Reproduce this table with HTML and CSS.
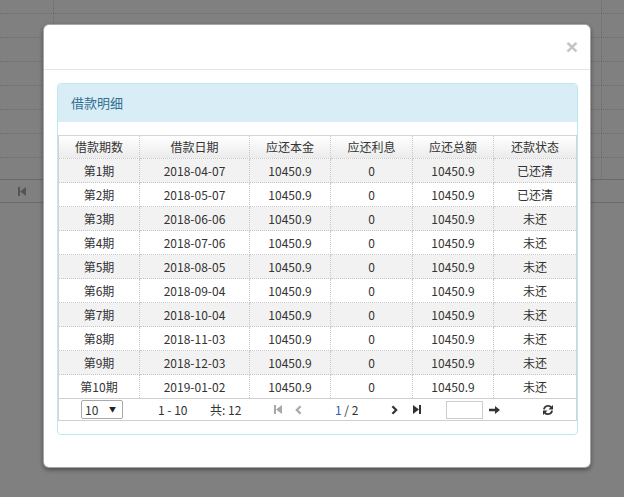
FILE: index.html
```html
<!DOCTYPE html>
<html lang="zh-CN">
<head>
<meta charset="utf-8">
<title>借款明细</title>
<link rel="stylesheet" href="styles.css">
</head>
<body>
<div class="page">
  <div class="bg-row first"><div class="bg-cell"></div><div class="bg-cell wide"></div></div>
  <div class="bg-row"><div class="bg-cell"></div><div class="bg-cell wide"></div></div>
  <div class="bg-row"><div class="bg-cell"></div><div class="bg-cell wide"></div></div>
  <div class="bg-row"><div class="bg-cell"></div><div class="bg-cell wide"></div></div>
  <div class="bg-row"><div class="bg-cell"></div><div class="bg-cell wide"></div></div>
  <div class="bg-row"><div class="bg-cell"></div><div class="bg-cell wide"></div></div>
  <div class="bg-row"><div class="bg-cell"></div><div class="bg-cell wide"></div></div>
  <div class="bg-row last"><div class="bg-cell"></div><div class="bg-cell wide"></div></div>
  <div class="bg-pager">
    <svg class="ico" width="8" height="9" viewBox="0 0 8 9"><rect x="0" y="0" width="2" height="9" fill="#555"/><polygon points="8,0 2,4.5 8,9" fill="#555"/></svg>
  </div>
</div>

<div class="modal">
  <div class="modal-header">
    <span class="close">×</span>
  </div>
  <div class="modal-body">
    <div class="panel">
      <div class="panel-heading">借款明细</div>
      <div class="panel-body">
        <div class="grid-wrap">
          <table class="grid">
            <colgroup>
              <col class="c1"><col class="c2"><col class="c3"><col class="c4"><col class="c5"><col class="c6">
            </colgroup>
            <thead>
              <tr><th>借款期数</th><th>借款日期</th><th>应还本金</th><th>应还利息</th><th>应还总额</th><th>还款状态</th></tr>
            </thead>
            <tbody>
              <tr class="odd"><td>第1期</td><td>2018-04-07</td><td>10450.9</td><td>0</td><td>10450.9</td><td>已还清</td></tr>
              <tr><td>第2期</td><td>2018-05-07</td><td>10450.9</td><td>0</td><td>10450.9</td><td>已还清</td></tr>
              <tr class="odd"><td>第3期</td><td>2018-06-06</td><td>10450.9</td><td>0</td><td>10450.9</td><td>未还</td></tr>
              <tr><td>第4期</td><td>2018-07-06</td><td>10450.9</td><td>0</td><td>10450.9</td><td>未还</td></tr>
              <tr class="odd"><td>第5期</td><td>2018-08-05</td><td>10450.9</td><td>0</td><td>10450.9</td><td>未还</td></tr>
              <tr><td>第6期</td><td>2018-09-04</td><td>10450.9</td><td>0</td><td>10450.9</td><td>未还</td></tr>
              <tr class="odd"><td>第7期</td><td>2018-10-04</td><td>10450.9</td><td>0</td><td>10450.9</td><td>未还</td></tr>
              <tr><td>第8期</td><td>2018-11-03</td><td>10450.9</td><td>0</td><td>10450.9</td><td>未还</td></tr>
              <tr class="odd"><td>第9期</td><td>2018-12-03</td><td>10450.9</td><td>0</td><td>10450.9</td><td>未还</td></tr>
              <tr class="lastrow"><td>第10期</td><td>2019-01-02</td><td>10450.9</td><td>0</td><td>10450.9</td><td>未还</td></tr>
            </tbody>
          </table>
          <div class="pager">
            <div class="select"><span>10</span><span class="caret">▼</span></div>
            <span class="info range">1 - 10</span>
            <span class="info total">共: 12</span>
            <svg class="p-first" width="8" height="9" viewBox="0 0 8 9"><rect x="0" y="0" width="2" height="9" fill="#a8a8a8"/><polygon points="8,0 2,4.5 8,9" fill="#a8a8a8"/></svg>
            <svg class="p-prev" width="7" height="10" viewBox="0 0 7 10"><polyline points="5.6,1.2 1.8,5 5.6,8.8" fill="none" stroke="#a8a8a8" stroke-width="2.2"/></svg>
            <span class="pages"><span class="cur">1</span> / 2</span>
            <svg class="p-next" width="7" height="10" viewBox="0 0 7 10"><polyline points="1.4,1.2 5.2,5 1.4,8.8" fill="none" stroke="#333" stroke-width="2.2"/></svg>
            <svg class="p-last" width="8" height="9" viewBox="0 0 8 9"><polygon points="0,0 6,4.5 0,9" fill="#333"/><rect x="6" y="0" width="2" height="9" fill="#333"/></svg>
            <div class="goto"></div>
            <svg class="p-go" width="11" height="8" viewBox="0 0 11 8"><path d="M0 2.8h6V0l5 4-5 4V5.2H0z" fill="#333"/></svg>
            <svg class="p-refresh" width="12" height="12" viewBox="0 0 12 12"><path d="M1.9 5.4A4.2 4.2 0 0 1 9.3 3.4" fill="none" stroke="#333" stroke-width="1.8"/><polygon points="11,0.9 11,5.6 6.4,5.6" fill="#333"/><path d="M10.1 6.6A4.2 4.2 0 0 1 2.7 8.6" fill="none" stroke="#333" stroke-width="1.8"/><polygon points="1,11.1 1,6.4 5.6,6.4" fill="#333"/></svg>
          </div>
        </div>
      </div>
    </div>
  </div>
</div>
</body>
</html>
```

FILE: styles.css
```css
* { box-sizing: border-box; }

body {
  margin: 0;
  width: 624px;
  height: 497px;
  overflow: hidden;
  position: relative;
  background: #808080;
  font-family: "Noto Sans CJK SC", "Noto Sans", sans-serif;
  font-size: 12px;
  color: #333;
}

/* dimmed page behind the dialog */
.page { width: 624px; }
.bg-row {
  display: flex;
  height: 24px;
  border-bottom: 1px dotted #6c6c6c;
}
.bg-row.first { height: 14px; }
.bg-row.last { height: 21px; border-bottom: none; }
.bg-cell {
  width: 54px;
  height: 100%;
  border-right: 1px dotted #6c6c6c;
}
.bg-cell.wide { width: 548px; }
.bg-pager {
  height: 24px;
  border-top: 1px solid #6a6a6a;
  border-bottom: 1px solid #6a6a6a;
  display: flex;
  align-items: center;
  padding-left: 18px;
}

/* dialog */
.modal {
  position: absolute;
  left: 43px;
  top: 24px;
  width: 548px;
  height: 444px;
  background: #fff;
  border: 1px solid rgba(0, 0, 0, 0.35);
  border-radius: 6px;
  box-shadow: 0 2px 4px rgba(0, 0, 0, 0.4);
}
.modal-header {
  height: 45px;
  border-bottom: 1px solid #e5e5e5;
  display: flex;
  justify-content: flex-end;
  align-items: center;
  padding-right: 12px;
}
.close {
  font-family: "Liberation Sans", Arial, sans-serif;
  font-weight: bold;
  font-size: 21px;
  line-height: 20px;
  color: #c4c4c4;
  margin-top: -1px;
}
.modal-body {
  padding: 13px 12px 0 13px;
}

.panel {
  border: 1px solid #bce8f1;
  border-radius: 4px;
  width: 521px;
}
.panel-heading {
  height: 38px;
  background: #d9edf7;
  color: #31708f;
  font-size: 13px;
  line-height: 38px;
  padding-left: 13px;
  border-radius: 3px 3px 0 0;
}
.panel-body {
  padding: 13px 0 13px 0;
}

.grid-wrap {
  border: 1px solid #d4d4d4;
  border-bottom: none;
}
.grid {
  width: 517px;
  table-layout: fixed;
  border-collapse: separate;
  border-spacing: 0;
}
.c1 { width: 81px; }
.c2 { width: 110px; }
.c3 { width: 81px; }
.c4 { width: 82px; }
.c5 { width: 81px; }
.c6 { width: 82px; }

.grid th,
.grid td {
  padding: 0;
  text-align: center;
  font-weight: normal;
  white-space: nowrap;
  border-right: 1px dotted #c8c8c8;
  border-bottom: 1px dotted #c8c8c8;
}
.grid th:last-child,
.grid td:last-child { border-right: none; }
.grid th {
  height: 23px;
  line-height: 22px;
  background: linear-gradient(#ffffff, #ebebeb);
}
.grid td {
  height: 24px;
  line-height: 23px;
  background: #fff;
}
.grid tr.odd td { background: #f2f2f2; }
.grid tr.lastrow td { border-bottom: none; height: 23px; }

.pager {
  height: 23px;
  border-top: 1px solid #cfcfcf;
  border-bottom: 1px solid #cfcfcf;
  display: flex;
  align-items: center;
  padding-left: 22px;
  color: #333;
}
.select {
  width: 42px;
  height: 19px;
  border: 1px solid #a9a9a9;
  border-radius: 2px;
  display: flex;
  align-items: center;
  justify-content: space-between;
  padding: 0 6px 0 3px;
  line-height: 17px;
  font-size: 12px;
}
.caret { font-size: 7px; color: #222; }
.info { line-height: 20px; }
.range { margin-left: 35px; width: 32px; }
.total { margin-left: 20px; width: 36px; }
.p-first { margin-left: 28px; }
.p-prev { margin-left: 13px; }
.pages { margin-left: 33px; width: 26px; line-height: 20px; }
.cur { color: #2a62a8; }
.p-next { margin-left: 30px; }
.p-last { margin-left: 15px; }
.goto {
  margin-left: 25px;
  width: 37px;
  height: 18px;
  border: 1px solid #ccc;
}
.p-go { margin-left: 6px; }
.p-refresh { margin-left: 42px; }
```
